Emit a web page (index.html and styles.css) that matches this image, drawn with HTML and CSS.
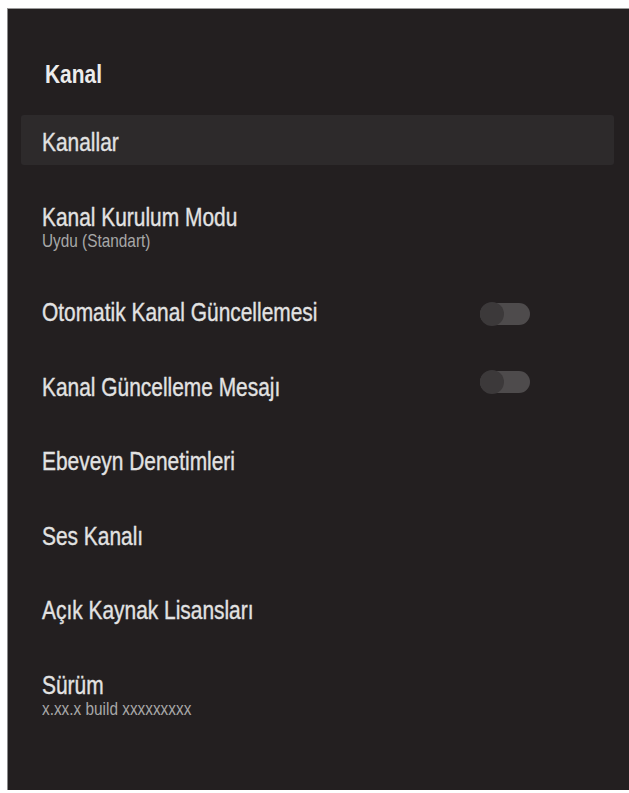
FILE: index.html
```html
<!DOCTYPE html>
<html lang="tr">
<head>
<meta charset="utf-8">
<title>Kanal</title>
<link rel="stylesheet" href="styles.css">
</head>
<body>
<div class="panel">
  <div class="header">Kanal</div>
  <div class="list">
    <div class="row selected"><div class="texts"><div class="title">Kanallar</div></div></div>
    <div class="row two"><div class="texts"><div class="title">Kanal Kurulum Modu</div><div class="sub">Uydu (Standart)</div></div></div>
    <div class="row"><div class="texts"><div class="title">Otomatik Kanal Güncellemesi</div></div><span class="toggle low"><span class="knob"></span></span></div>
    <div class="row"><div class="texts"><div class="title">Kanal Güncelleme Mesajı</div></div><span class="toggle high"><span class="knob"></span></span></div>
    <div class="row"><div class="texts"><div class="title">Ebeveyn Denetimleri</div></div></div>
    <div class="row"><div class="texts"><div class="title">Ses Kanalı</div></div></div>
    <div class="row"><div class="texts"><div class="title">Açık Kaynak Lisansları</div></div></div>
    <div class="row two"><div class="texts"><div class="title">Sürüm</div><div class="sub">x.xx.x build xxxxxxxxx</div></div></div>
  </div>
</div>
</body>
</html>
```
FILE: styles.css
```css
html, body {
  background: #ffffff;
}
body {
  margin: 8px 0 3px 7px;
  font-family: "Liberation Sans", Arial, sans-serif;
}
.panel {
  background: #231f20;
  border-top: 1px solid #9a9a9a;
  border-left: 1px solid #8a8a8a;
  padding-top: 50px;
  box-sizing: border-box;
  height: 782px;
}
.header {
  font-size: 25.5px;
  line-height: 30px;
  font-weight: bold;
  color: #ececec;
  padding-left: 37px;
  margin-bottom: 26px;
  transform: scaleX(0.82);
  transform-origin: 37px 50%;
}
.list {
  display: flex;
  flex-direction: column;
  gap: 24.5px;
  margin: 0 15px 0 13px;
}
.row {
  display: flex;
  align-items: center;
  padding: 12px 0 8px 21px;
  border-radius: 3px;
}
.row.two {
  padding-bottom: 11px;
}
.row.selected {
  background: #2d2a2b;
}
.texts {
  flex: 1;
  display: flex;
  flex-direction: column;
}
.title {
  font-size: 25.5px;
  line-height: 30px;
  color: #e2e2e2;
  -webkit-text-stroke: 0.35px #e2e2e2;
  transform: scaleX(0.82);
  transform-origin: 0 50%;
}
.sub {
  font-size: 18.5px;
  line-height: 18px;
  color: #a8a8a8;
  transform: scaleX(0.83);
  transform-origin: 0 50%;
}
.toggle {
  position: relative;
  flex: none;
  margin-right: 84px;
  width: 50px;
  height: 22px;
  border-radius: 11px;
  background: #4e4b4c;
}
.toggle.low {
  margin-top: 4px;
}
.toggle.high {
  margin-top: -9px;
}
.knob {
  position: absolute;
  left: 0;
  top: -1px;
  width: 24px;
  height: 24px;
  border-radius: 50%;
  background: #3c393a;
}
```
